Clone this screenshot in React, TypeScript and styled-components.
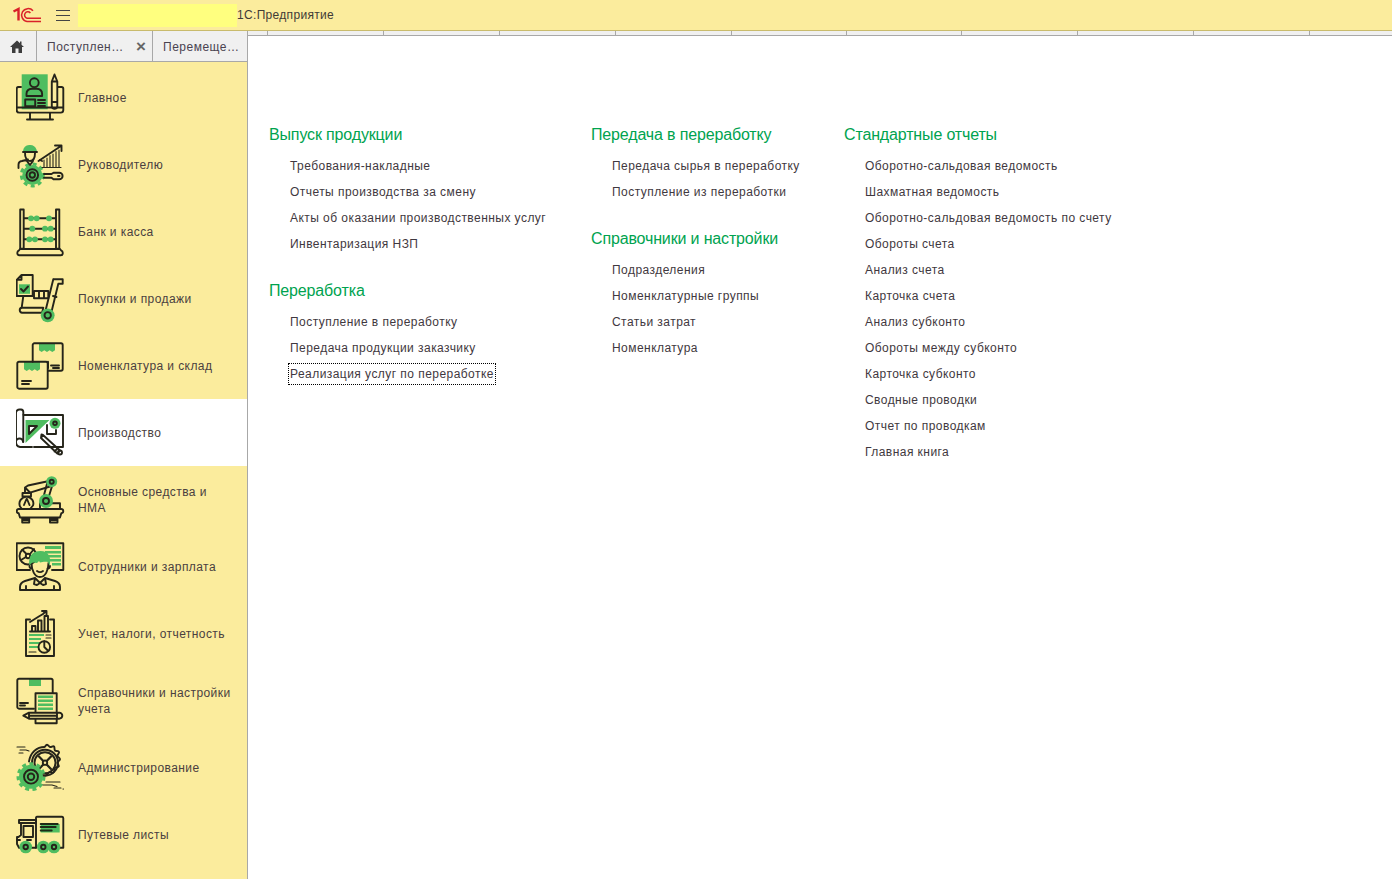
import React from "react";
import styled, { createGlobalStyle } from "styled-components";

const Global = createGlobalStyle`
  html, body { margin: 0; padding: 0; height: 100%; overflow: hidden; background: #fff; }
  body { font-family: "Liberation Sans", Arial, sans-serif; font-size: 12px; color: #3a3338; }
`;

const Page = styled.div`
  width: 1392px; height: 879px; display: flex; flex-direction: column; overflow: hidden;
`;
const TopBar = styled.header`
  height: 30px; flex: none; display: flex; align-items: center; background: #fbec9d;
  border-bottom: 1px solid #c9bb6c;
`;
const Logo = styled.svg`width: 30px; height: 16px; margin-left: 12px; flex: none;`;
const Burger = styled.button`
  width: 14px; height: 11px; margin-left: 14px; padding: 0; border: 0; background: none; flex: none;
  border-top: 1px solid #444; border-bottom: 1px solid #444; position: relative;
  &::after { content: ""; position: absolute; left: 0; right: 0; top: 4px; height: 1px; background: #444; }
`;
const Masked = styled.div`width: 159px; height: 23px; margin-left: 8px; background: #ffff7f; flex: none;`;
const AppTitle = styled.div`font-size: 12px; letter-spacing: 0.32px; color: #3f3a36;`;

const TabRow = styled.div`height: 31px; flex: none; display: flex; background: #f0f0f0;`;
const Tabs = styled.div`display: flex; width: 248px; flex: none; border-bottom: 1px solid #a8a8a8; border-right: 1px solid #a8a8a8; box-sizing: border-box;`;
const Tab = styled.div<{ $w: number }>`
  width: ${(p) => p.$w}px; flex: none; box-sizing: border-box; display: flex; align-items: center;
  padding: 1px 0 0 10px; border-right: 1px solid #a8a8a8; color: #4a4350; font-size: 12px; letter-spacing: 0.5px;
  &:last-child { border-right: 0; }
`;
const TabText = styled.span`flex: 1; white-space: nowrap; overflow: hidden;`;
const Close = styled.span`font-size: 17px; line-height: 14px; font-weight: 700; color: #666; margin-right: 6px; letter-spacing: 0;`;
const HomeIcon = styled.svg`width: 14px; height: 13px;`;
const Strip = styled.div`flex: 1; display: flex; flex-direction: column;`;
const Ticks = styled.div`height: 4px; display: flex; padding-left: 19px; border-bottom: 1px solid #a8a8a8; `;
const Tick = styled.i<{ $w: number }>`display: block; width: ${(p) => p.$w}px; flex: none; box-sizing: border-box; border-left: 1px solid #a8a8a8;`;

const Body = styled.div`flex: 1; display: flex; min-height: 0; margin-top: -26px;`;
const Side = styled.nav`
  width: 247px; flex: none; background: #fbec9d; border-right: 1px solid #a8a8a8; margin-top: 26px; padding-top: 2px;
`;
const NavItem = styled.div<{ $active?: boolean }>`
  height: 67px; display: flex; align-items: center; padding-left: 16px;
  background: ${(p) => (p.$active ? "#fff" : "transparent")};
  color: #4a4040; font-size: 12px; line-height: 16px; letter-spacing: 0.42px;
`;
const NavLabel = styled.div`margin-left: 12px; width: 156px;`;
const IconSvg = styled.svg`
  width: 50px; height: 50px; flex: none; fill: none; stroke: #25241a; stroke-width: 1.9; stroke-linecap: round; stroke-linejoin: round;
  .g { fill: #4fbd60; stroke: none; }
  .teeth { stroke: #4fbd60; stroke-linecap: butt; }
  .t { stroke-width: 1.1; }
`;

const Content = styled.main`
  flex: 1; display: flex; padding: 89px 0 0 21px; background: #fff; align-items: flex-start;
`;
const Column = styled.div<{ $w: number }>`width: ${(p) => p.$w}px; flex: none;`;
const Section = styled.section`margin-bottom: 28px;`;
const Heading = styled.h2`
  margin: 0 0 12px; font-size: 16px; font-weight: 400; line-height: 20px; color: #00a34f; letter-spacing: -0.15px;
`;
const LinkItem = styled.div<{ $focus?: boolean }>`
  height: 18px; line-height: 18px; margin: 0 0 8px 21px; font-size: 12px; letter-spacing: 0.45px; color: #3f3840; white-space: nowrap; width: fit-content;
  ${(p) => p.$focus && "outline: 1px dotted #000; outline-offset: 1px;"}
`;

const Icon = ({ children }: { children: React.ReactNode }) => <IconSvg viewBox="0 0 50 50">{children}</IconSvg>;

const Gear = ({ cx, cy, r }: { cx: number; cy: number; r: number }) => (
  <>
    <circle className="g" cx={cx} cy={cy} r={r} />
    <circle className="teeth" cx={cx} cy={cy} r={r + 1} strokeWidth="3" strokeDasharray="4 3.4" />
    <circle cx={cx} cy={cy} r={r * 0.58} />
    <circle cx={cx} cy={cy} r={r * 0.27} />
  </>
);

const icons: React.ReactNode[] = [
  <>
    <rect className="g" x="5.7" y="1.3" width="26" height="35" />
    <path d="M5 14H2.500A1.800 1.800 0 0 0 .7 15.800V37a2.600 2.600 0 0 0 2.600 2.600h41.400A2.600 2.600 0 0 0 47.300 37V15.800A1.800 1.800 0 0 0 45.500 14H42M.9 34.500h46M14 39.800v6M34 39.800v6M11 46.500h26" />
    <circle cx="18.300" cy="9.700" r="4.400" />
    <path d="M10.500 23v-2.200c0-3 2.500-4.800 5.500-5h4.600c3 .2 5.500 2 5.500 5V23ZM9.200 26.500h10v6.800h-10ZM22 27h7M22 30h7M22 33h7" />
    <path d="M35.800 8.500 38.500 1.500l2.800 7v25a2.800 2.800 0 0 1-5.500 0ZM35.800 8.500h5.500M35.800 29h5.500" />
  </>,
  <>
    <path className="g" d="M7 11a7 7 0 0 1 13.500-1.500l.7 2.500Z" />
    <Gear cx={16.3} cy={35} r={10} />
    <path d="M7 12h14M9 12c-.3 6 2 9 5 9s5-3 5-8M2.500 28v-3.300c0-2 1.500-3.500 3.500-3.700l6-1.500M24 20l2 1M10 20l4 5 3-4" />
    <path d="M22.500 21 45 6M39 5.500h6.500V11" />
    <path d="M28 27V20M31 27V18M34 27V15.500M37 27V14M40 27V11.500M43 27V10M26 27.500h19" className="t" />
    <path d="M28 34h7.500l2-1.300h5.800a3 3 0 0 1 0 6.600h-5.800l-2-1.600H28" />
    <path d="M42 36h1.500" />
  </>,
  <>
    <path d="M4.200 2.500h3.500v39.300H4.200ZM40 2.500h3.300v39.300H40ZM8 11.300h32M8 21.700h32M8 32.300h32" />
    <path d="M4 42h40l1.200 1.500c1.400.3 1.600 1.200 1.600 2.600s-.7 2.200-2 2.200H3.300c-1.300 0-2-.8-2-2.200s.3-2.300 1.600-2.600Z" />
    <circle className="g" cx="15" cy="11.300" r="2.900" /><circle className="g" cx="20.700" cy="11.300" r="2.900" /><circle className="g" cx="33" cy="11.300" r="2.900" />
    <circle className="g" cx="16.300" cy="21.700" r="2.900" /><circle className="g" cx="29" cy="21.700" r="2.900" /><circle className="g" cx="34.700" cy="21.700" r="2.900" />
    <circle className="g" cx="13.300" cy="32.300" r="2.900" /><circle className="g" cx="19" cy="32.300" r="2.900" /><circle className="g" cx="29" cy="32.300" r="2.900" /><circle className="g" cx="34.700" cy="32.300" r="2.900" />
  </>,
  <>
    <rect className="g" x="3" y="10.300" width="11" height="9.500" />
    <path d="M5.500 1h11.200v21H.7V5.800ZM5.500 1v4.800H.7M5 15l2.500 2.500L12 12.500" />
    <path d="M18 17h14.300v7.300H18ZM23 17v7.300M28 17v7.300" />
    <path d="M37.300 5.300h9.400v4.400H42.300L35.700 37M37.300 5.300 29 38.700M37 22l3.500 1" />
    <path d="M6 33.700h21.300l-1.200 5H6.500a2.500 2.500 0 0 1-.5-5ZM7.300 22l-1.600 11.700" />
    <circle className="g" cx="31.700" cy="41.300" r="6.900" />
    <circle cx="31.700" cy="41.300" r="3.200" />
  </>,
  <>
    <path className="g" d="M23 2.300h16v7l-2.700 1.800-2.700-1.800-2.600 1.800-2.700-1.800-2.700 1.800-2.600-1.800Z" />
    <path className="g" d="M8 20.700h16v7.500l-2.700 1.800-2.600-1.800-2.700 1.800-2.700-1.800-2.600 1.800L8 28.200Z" />
    <path d="M32 20.700V27M32 29.800h13a1.700 1.700 0 0 0 1.700-1.700V4A1.700 1.700 0 0 0 45 2.300H18.400a1.700 1.700 0 0 0-1.700 1.700V20.700" />
    <path d="M3 20.700h27a1.700 1.700 0 0 1 1.700 1.700V46a1.700 1.700 0 0 1-1.700 1.700H3A1.700 1.700 0 0 1 1.300 46V22.400A1.700 1.700 0 0 1 3 20.700Z" />
    <path d="M35 24.500h8M37 27h6M6 40h9M6 43h7" />
  </>,
  <>
    <path className="g" d="M9.500 12h24L9.500 35Z" />
    <path fill="#fff" stroke="none" d="M13 18h8l-8 8Z" />
    <path d="M13 18h8l-8 8Z" />
    <circle className="g" cx="39" cy="15.300" r="5.500" />
    <circle cx="39" cy="15.300" r="1.800" />
    <path d="M7 7h40v32H27M7 34a3.500 3.500 0 0 0-7 0V5a3.500 3.500 0 0 1 3.500-3.500H5A2.500 2.500 0 0 1 7.300 4v30M0 34c0 2.500 1.500 4.500 4 5h12M18 39h9" />
    <path d="M31 17v9h9v-4" />
    <path d="m27 27 17 15.500-2.700 3L25 30Zm-2 3 .5-3.500 1.500.5M41 41l-2.500 2.500" />
    <circle cx="44" cy="44.500" r="2" />
  </>,
  <>
    <path d="M3 34h42a1.700 1.700 0 0 1 .3 4.200L44 42.500H4L2.700 38.200A1.700 1.700 0 0 1 3 34ZM6.200 43h7v4.500h-7ZM34 43h7.500v4.500H34ZM6.500 45h6.500M34.500 45h6.500" />
    <path d="M24 33.700v-5.400h20v5.400" />
    <path d="M9 17.700V12.500l3-2 21-4.500M14 17.700l20-6.200M9 12.500l5 5" />
    <path d="M6.500 18h8.500v3.500H6.500ZM10.500 21.500c-5 1-8.500 4.500-6.500 10l2 2.500M10.500 21.500c5 1 8 4.500 6.500 9l-3 3.500M10.500 24l-2.500 6M11 24l2.500 6" />
    <path d="M28 20l3.500-13M33 21l4-13" />
    <circle className="g" cx="35.700" cy="6.700" r="5.500" /><circle cx="35.700" cy="6.700" r="2" />
    <circle className="g" cx="30" cy="26" r="7" /><circle cx="30" cy="26" r="3" />
  </>,
  <>
    <path d="M.7 1.300h46.600V28H36M.7 1.300V28H14" />
    <rect className="g" x="29" y="4" width="16" height="3" />
    <rect className="g" x="29" y="9" width="16" height="2.500" />
    <rect className="g" x="32" y="13" width="13" height="2.500" />
    <rect className="g" x="34" y="17" width="11" height="2.500" />
    <rect className="g" x="36" y="21" width="9" height="2.500" />
    <circle cx="12" cy="14" r="8.500" /><circle cx="12" cy="14" r="2.200" />
    <path d="M6.500 8l4 4M14 15l4 5M5 18l5-3M14 12l4-5" />
    <path d="M15.500 21c0 7 3 14 8.500 14s8.500-7 8.500-14" />
    <path className="g" d="M13.500 24c-1.800-10 3-15 11-15s11 6 9 15l-1.500-4c-3-.5-6 0-8 .5l-1-1.500-2 2-4-.5-2 1Z" />
    <path d="M13.500 24c0 1.500 1 2.500 2.500 2.500M34 24c0 1.500-1 2.500-2.500 2.500M21 29c2 1.500 4 1.500 6 0" />
    <path d="M4 48v-3c0-4 2-5 5-6l10-3 5 5 5-5 10 3c3 1 5 2 5 6v3ZM10 44v4M38 44v4M19 36l-1 6 3 1 3-2 3 2 3-1-1-6" />
  </>,
  <>
    <path d="M14 10.500h-4V47h28V10.500h-4" />
    <path d="M16 22v-5h3.500v5M22 22V11.500h3.500V22M28.500 22V7h3.500v15M14 22.500h20M14 13l8-5 5-3 3-3M26 2h4.500v4.500" />
    <rect className="g" x="13" y="25" width="15" height="2" /><rect className="g" x="13" y="29" width="12" height="2" /><rect className="g" x="13" y="33" width="11" height="2" /><rect className="g" x="13" y="37" width="9" height="2" />
    <path d="M30 26h5M30 29h5M13 43h7" className="t" />
    <circle cx="28.300" cy="38" r="5.800" />
    <path d="M28.300 32.200V38l4 4" />
  </>,
  <>
    <rect className="g" x="13" y="3" width="12" height="7" />
    <path d="M18 32.700H3a1.700 1.700 0 0 1-1.700-1.700V4.400A1.700 1.700 0 0 1 3 2.700h32a1.700 1.700 0 0 1 1.700 1.700V17" />
    <path d="M4 27h8M4 29.500h5" />
    <path d="M19.500 17.300h21.200V37M19.500 17.300V36M19.500 43v4.300h21.200V43" />
    <rect className="g" x="22" y="19.500" width="15" height="2.500" /><rect className="g" x="22" y="23.500" width="15" height="2.500" /><rect className="g" x="22" y="27.500" width="15" height="2.500" /><rect className="g" x="22" y="31.500" width="15" height="2.500" />
    <path d="M13 36.700h30.500c1.500.4 2.800 1.500 2.800 3s-1.300 2.600-2.800 3H13l-5.700-3ZM13 36.700v6M41 36.700v6M13 39.700h28" />
  </>,
  <>
    <path d="M13 18.500C14.500 9 21 4 28.500 4c1 0 1-2.300 2.500-2.300s1.500 2 3 2.300 3-1.500 4-.5 0 3 1 4 3.500 0 4 1.500-1.600 2.200-1.500 3.700 2.500 2 2.500 3.500-2.400 1.800-2.600 3.300 2 3 1.300 4-3 .3-3.800 1.500-.2 3.600-1.500 4.500-3-.8-4.300-.2-1.400 2.800-3 3c-2 .3-3 .2-4.300 0" />
    <circle cx="29" cy="19.700" r="13" /><circle cx="29" cy="19.700" r="10.500" />
    <path d="m23 13.500 12 12.500M35 13.500 23 26" strokeWidth="2.200" />
    <circle cx="29" cy="19.700" r="2.200" fill="#fbec9d" />
    <Gear cx={15} cy={33.7} r={12} />
    <path d="M1 4h8M4 7h6l3 1M3 10h4M30 39h14M27 42h9l5 1.500M38 45h7M47 46h.5" className="t" />
  </>,
  <>
    <path d="M20 7.500A1.500 1.500 0 0 1 21 6.700h25a1.500 1.500 0 0 1 1.300 1.500V37.700H38M20 8v29.700" />
    <rect className="g" x="24.700" y="14" width="19" height="8.500" />
    <path d="M24.700 14h17M24.700 17h15M24.700 20.500h11" stroke="#1d2a17" />
    <path d="M3 10h17v3H3ZM5 13v12l-2.500 2H1v7l2 3.700h3M7.500 16h9.500v11H7.500Z" />
    <path d="M11 37.700h9M1 30h3M11 30h4" />
    <circle className="g" cx="9.700" cy="37" r="6.300" /><circle cx="9.700" cy="37" r="2.200" />
    <circle className="g" cx="27.300" cy="37" r="6.300" /><circle cx="27.300" cy="37" r="2.200" />
    <circle className="g" cx="38" cy="37" r="6.300" /><circle cx="38" cy="37" r="2.200" />
  </>,
];

const navLabels = [
  "Главное", "Руководителю", "Банк и касса", "Покупки и продажи", "Номенклатура и склад", "Производство",
  "Основные средства и НМА", "Сотрудники и зарплата", "Учет, налоги, отчетность", "Справочники и настройки учета",
  "Администрирование", "Путевые листы",
];

const tickWidths = [116, 116, 116, 116, 115, 115, 116, 116, 116, 83];

type Group = { title: string; items: string[] };
const columns: { w: number; groups: Group[] }[] = [
  { w: 322, groups: [
    { title: "Выпуск продукции", items: ["Требования-накладные", "Отчеты производства за смену", "Акты об оказании производственных услуг", "Инвентаризация НЗП"] },
    { title: "Переработка", items: ["Поступление в переработку", "Передача продукции заказчику", "Реализация услуг по переработке"] },
  ]},
  { w: 253, groups: [
    { title: "Передача в переработку", items: ["Передача сырья в переработку", "Поступление из переработки"] },
    { title: "Справочники и настройки", items: ["Подразделения", "Номенклатурные группы", "Статьи затрат", "Номенклатура"] },
  ]},
  { w: 320, groups: [
    { title: "Стандартные отчеты", items: ["Оборотно-сальдовая ведомость", "Шахматная ведомость", "Оборотно-сальдовая ведомость по счету", "Обороты счета", "Анализ счета", "Карточка счета", "Анализ субконто", "Обороты между субконто", "Карточка субконто", "Сводные проводки", "Отчет по проводкам", "Главная книга"] },
  ]},
];

export default function App() {
  return (
    <Page>
      <Global />
      <TopBar>
        <Logo viewBox="0 0 30 16" fill="none" stroke="#d9222a">
          <path d="M1.500 4.500 6.500 2v11.500" strokeWidth="2.400" />
          <path d="M21 3.800A6.500 6.500 0 1 0 15 14.500H29" strokeWidth="1.500" />
          <path d="M18.400 6A3.300 3.300 0 1 0 15 11.300H29" strokeWidth="1.500" />
        </Logo>
        <Burger aria-label="Меню" />
        <Masked />
        <AppTitle>1С:Предприятие</AppTitle>
      </TopBar>
      <TabRow>
        <Tabs>
          <Tab $w={37}>
            <HomeIcon viewBox="0 0 14 13"><path fill="#3d3d3d" d="M7 .5 0 7h2v6h3.500V8.500h3V13H12V7h2l-2.500-2.300V1.500H10v1.800Z" /></HomeIcon>
          </Tab>
          <Tab $w={116}><TabText>Поступлен…</TabText><Close>×</Close></Tab>
          <Tab $w={94}><TabText>Перемеще…</TabText></Tab>
        </Tabs>
        <Strip>
          <Ticks>{tickWidths.map((w, i) => <Tick key={i} $w={w} />)}</Ticks>
        </Strip>
      </TabRow>
      <Body>
        <Side>
          {navLabels.map((l, i) => (
            <NavItem key={l} $active={i === 5}>
              <Icon>{icons[i]}</Icon>
              <NavLabel>{l}</NavLabel>
            </NavItem>
          ))}
        </Side>
        <Content>
          {columns.map((c) => (
            <Column key={c.w} $w={c.w}>
              {c.groups.map((g) => (
                <Section key={g.title}>
                  <Heading>{g.title}</Heading>
                  {g.items.map((it) => (
                    <LinkItem key={it} $focus={it === "Реализация услуг по переработке"}>{it}</LinkItem>
                  ))}
                </Section>
              ))}
            </Column>
          ))}
        </Content>
      </Body>
    </Page>
  );
}
